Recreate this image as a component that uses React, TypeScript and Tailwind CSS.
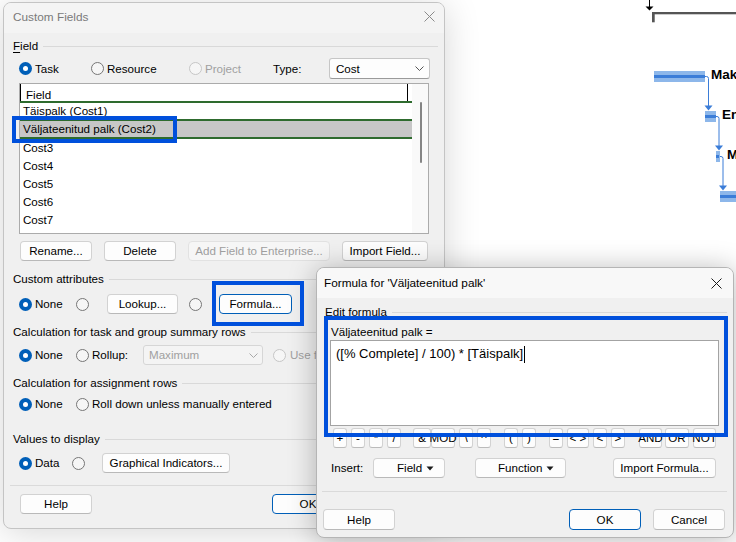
import React from "react";

const FONT = "font-['Liberation_Sans',Arial,sans-serif] text-[11.6px] leading-[14px]";

function Radio({ on = false, disabled = false }: { on?: boolean; disabled?: boolean }) {
  if (on)
    return (
      <span className="flex h-[13px] w-[13px] shrink-0 items-center justify-center rounded-full bg-[#005fb8]">
        <span className="h-[5px] w-[5px] rounded-full bg-white" />
      </span>
    );
  return (
    <span
      className={
        disabled
          ? "h-[13px] w-[13px] shrink-0 rounded-full border border-[#c6c6c6] bg-[#f6f6f6]"
          : "h-[13px] w-[13px] shrink-0 rounded-full border border-[#767676] bg-[#f6f6f6]"
      }
    />
  );
}

type BtnProps = {
  children?: React.ReactNode;
  className?: string;
  variant?: "normal" | "primary" | "disabled";
};

function Btn({ children, className = "", variant = "normal" }: BtnProps) {
  const v =
    variant === "primary"
      ? "border-[#005fb8] bg-[#fdfdfd] text-black"
      : variant === "disabled"
      ? "border-[#e2e2e2] bg-[#f6f6f6] text-[#9e9e9e]"
      : "border-[#d2d2d2] border-b-[#b9b9b9] bg-[#fdfdfd] text-black";
  return (
    <div
      className={`flex h-[20px] shrink-0 items-center justify-center whitespace-nowrap rounded-[4px] border ${v} ${className}`}
    >
      {children}
    </div>
  );
}

function GroupLabel({ children }: { children: React.ReactNode }) {
  return (
    <div className="flex h-[14px] items-center gap-[5px]">
      <span className="whitespace-nowrap">{children}</span>
      <span className="h-px flex-1 bg-[#d9d9d9]" />
    </div>
  );
}

function Chevron({ color }: { color: string }) {
  return (
    <svg width="9" height="5" viewBox="0 0 9 5" className="shrink-0">
      <path d="M0.5 0.5 L4.5 4.5 L8.5 0.5" fill="none" stroke={color} strokeWidth="1" />
    </svg>
  );
}

function CloseX({ color }: { color: string }) {
  return (
    <svg width="11" height="11" viewBox="0 0 11 11" className="shrink-0">
      <path d="M0.5 0.5 L10.5 10.5 M10.5 0.5 L0.5 10.5" stroke={color} strokeWidth="1" />
    </svg>
  );
}

function DownTri() {
  return (
    <svg width="8" height="5" viewBox="0 0 8 5" className="shrink-0">
      <path d="M0.5 0.5 H7.5 L4 4.5 Z" fill="#1a1a1a" />
    </svg>
  );
}

function Gantt() {
  const bar = "#8db7ea";
  const band = "#3b7dd8";
  return (
    <svg className="absolute left-0 top-0" width="736" height="542" viewBox="0 0 736 542">
      <line x1="649.5" y1="0" x2="649.5" y2="7" stroke="#000" strokeWidth="1" />
      <path d="M645.5 6.5 H653.5 L649.5 10.5 Z" fill="#000" />
      <rect x="652" y="12" width="84" height="2.3" fill="#555" />
      <rect x="652" y="12" width="2.7" height="10.3" fill="#555" />

      <rect x="654" y="71" width="51" height="11" fill={bar} />
      <rect x="654" y="75" width="51" height="3" fill={band} />
      <path d="M705 76.5 H706.5 Q708.5 76.5 708.5 78.5 V106" stroke={band} fill="none" />
      <path d="M704.5 105.5 H712.5 L708.5 110.5 Z" fill={band} />

      <rect x="705" y="111" width="11" height="11" fill={bar} />
      <rect x="705" y="115" width="11" height="3" fill={band} />
      <path d="M716 116.5 H717 Q719 116.5 719 118.5 V146" stroke={band} fill="none" />
      <path d="M715 145.5 H723 L719 150.5 Z" fill={band} />

      <rect x="716" y="151" width="4" height="11" fill={bar} />
      <rect x="716" y="155" width="3" height="3" fill={band} />
      <path d="M720 156.5 H721 Q723 156.5 723 158.5 V186" stroke={band} fill="none" />
      <path d="M719 185.5 H727 L723 190.5 Z" fill={band} />

      <rect x="720" y="191" width="16" height="11" fill={bar} />
      <rect x="720" y="195" width="16" height="3" fill={band} />

      <text x="711" y="79" fontSize="13.5" fontWeight="bold" fill="#000">Mak</text>
      <text x="722" y="119" fontSize="13.5" fontWeight="bold" fill="#000">En</text>
      <text x="727" y="159" fontSize="13.5" fontWeight="bold" fill="#000">M</text>
    </svg>
  );
}

function CustomFields() {
  const rows = ["Cost3", "Cost4", "Cost5", "Cost6", "Cost7", "Cost8"];
  return (
    <div className="absolute left-[3px] top-[2px] h-[527px] w-[442px] overflow-hidden rounded-[8px] border border-[#c4c4c4] bg-[#f0f0f0] shadow-[0_4px_36px_rgba(0,0,0,0.16)]">
      {/* title bar */}
      <div className="flex h-[30px] items-center justify-between bg-[#f4f4f4] pb-[3px] pl-[9px] pr-[9px]">
        <span className="text-[11.8px] text-[#7a7a7a]">Custom Fields</span>
        <CloseX color="#8a8a8a" />
      </div>

      <div className="flex flex-col pl-[9px] pr-[6px]">
        <div className="mt-[6px]">
          <GroupLabel>
            <span className="underline underline-offset-[2px]">F</span>ield
          </GroupLabel>
        </div>

        {/* Task / Resource / Project / Type */}
        <div className="ml-[6px] mt-[5px] flex h-[21px] items-center">
          <div className="flex w-[72px] items-center gap-[3px]">
            <Radio on />
            <span>Task</span>
          </div>
          <div className="flex w-[98px] items-center gap-[3px]">
            <Radio />
            <span>Resource</span>
          </div>
          <div className="flex w-[84px] items-center gap-[3px]">
            <Radio disabled />
            <span className="text-[#a0a0a0]">Project</span>
          </div>
          <span className="w-[56px]">Type:</span>
          <div className="flex h-[21px] w-[101px] items-center justify-between rounded-[3px] border border-[#c6c6c6] border-b-[#9a9a9a] bg-[#fdfdfd] pl-[6px] pr-[5px]">
            <span>Cost</span>
            <Chevron color="#555" />
          </div>
        </div>

        {/* list */}
        <div className="ml-[6px] mt-[4px] flex h-[151px] w-[410px] overflow-hidden border border-[#ababab] bg-white">
          <div className="flex w-[392px] flex-col">
            <div className="flex h-[17px] shrink-0 items-stretch border-l border-black">
              <span className="flex flex-1 items-center pl-[5px] pt-[4px]">Field</span>
              <span className="mr-[4px] w-px bg-black" />
            </div>
            <div className="h-[2px] shrink-0 bg-[#2e6b2e]" />
            <div className="flex h-[16px] shrink-0 items-center pl-[3px]">Täispalk (Cost1)</div>
            <div className="h-[2px] shrink-0 bg-[#2e6b2e]" />
            <div className="flex h-[16px] shrink-0 items-center bg-[#c7c7c7] pl-[3px]">Väljateenitud palk (Cost2)</div>
            <div className="h-[2px] shrink-0 bg-[#2e6b2e]" />
            {rows.map((r) => (
              <div key={r} className="flex h-[18px] shrink-0 items-center pl-[3px]">
                {r}
              </div>
            ))}
          </div>
          <div className="flex w-[16px] flex-col bg-[#f9f9f9] pt-[18px]">
            <div className="ml-[8px] h-[61px] w-[2px] rounded-full bg-[#858585]" />
          </div>
        </div>

        {/* list buttons */}
        <div className="mt-[7px] flex h-[20px] items-center">
          <Btn className="ml-[7px] w-[72px]">Rename...</Btn>
          <Btn className="ml-[12px] w-[72px]">Delete</Btn>
          <Btn className="ml-[12px] w-[142px]" variant="disabled">
            Add Field to Enterprise...
          </Btn>
          <Btn className="ml-[12px] w-[86px]">Import Field...</Btn>
        </div>

        <div className="mt-[11px]">
          <GroupLabel>Custom attributes</GroupLabel>
        </div>
        <div className="ml-[6px] mt-[8px] flex h-[20px] items-center">
          <div className="flex w-[57px] items-center gap-[3px]">
            <Radio on />
            <span>None</span>
          </div>
          <Radio />
          <Btn className="ml-[18px] w-[71px]">Lookup...</Btn>
          <span className="ml-[11px] flex">
            <Radio />
          </span>
          <Btn className="ml-[17px] w-[73px]" variant="primary">
            Formula...
          </Btn>
        </div>

        <div className="mt-[11px]">
          <GroupLabel>Calculation for task and group summary rows</GroupLabel>
        </div>
        <div className="ml-[6px] mt-[6px] flex h-[20px] items-center">
          <div className="flex w-[57px] items-center gap-[3px]">
            <Radio on />
            <span>None</span>
          </div>
          <div className="flex w-[67px] items-center gap-[3px]">
            <Radio />
            <span>Rollup:</span>
          </div>
          <div className="flex h-[20px] w-[120px] items-center justify-between rounded-[3px] border border-[#d6d6d6] bg-[#f4f4f4] pl-[5px] pr-[4px] text-[#a0a0a0]">
            <span>Maximum</span>
            <Chevron color="#a8a8a8" />
          </div>
          <div className="ml-[10px] flex items-center gap-[4px] whitespace-nowrap">
            <Radio disabled />
            <span className="text-[#a0a0a0]">Use formula</span>
          </div>
        </div>

        <div className="mt-[11px]">
          <GroupLabel>Calculation for assignment rows</GroupLabel>
        </div>
        <div className="ml-[6px] mt-[4px] flex h-[20px] items-center">
          <div className="flex w-[57px] items-center gap-[3px]">
            <Radio on />
            <span>None</span>
          </div>
          <div className="flex items-center gap-[3px] whitespace-nowrap">
            <Radio />
            <span>Roll down unless manually entered</span>
          </div>
        </div>

        <div className="mt-[18px]">
          <GroupLabel>Values to display</GroupLabel>
        </div>
        <div className="ml-[6px] mt-[7px] flex h-[20px] items-center">
          <div className="flex w-[53px] items-center gap-[3px]">
            <Radio on />
            <span>Data</span>
          </div>
          <Radio />
          <Btn className="ml-[17px] w-[128px]">Graphical Indicators...</Btn>
        </div>

        <div className="-ml-[3px] -mr-[3px] mt-[12px] h-px bg-[#dadada]" />

        <div className="mt-[8px] flex h-[20px] items-center">
          <Btn className="ml-[7px] w-[72px]">Help</Btn>
          <Btn className="ml-[180px] w-[72px]" variant="primary">
            OK
          </Btn>
          <Btn className="ml-[12px] w-[72px]">Cancel</Btn>
        </div>
      </div>
    </div>
  );
}

function Op({ children, className = "" }: { children: React.ReactNode; className?: string }) {
  return (
    <div
      className={`flex h-[20px] shrink-0 items-center justify-center overflow-visible whitespace-nowrap rounded-[3px] border border-[#d2d2d2] border-b-[#bbbbbb] bg-[#fdfdfd] ${className}`}
    >
      {children}
    </div>
  );
}

function FormulaDialog() {
  return (
    <div className="absolute left-[316px] top-[267px] h-[271px] w-[418px] overflow-hidden rounded-[8px] border border-[#b5b5b5] bg-[#f0f0f0] shadow-[0_2px_28px_rgba(0,0,0,0.28)]">
      <div className="flex h-[30px] items-center justify-between bg-[#f8f8f8] pl-[7px] pr-[11px]">
        <span className="text-[11.8px]">Formula for 'Väljateenitud palk'</span>
        <CloseX color="#1a1a1a" />
      </div>

      <div className="flex flex-col pl-[8px] pr-[6px]">
        <div className="mt-[7px]">
          <GroupLabel>Edit formula</GroupLabel>
        </div>
        <div className="ml-[6px] mt-[6px] h-[14px]">Väljateenitud palk =</div>
        <div className="ml-[5px] mt-[1px] h-[86px] w-[389px] border border-[#a3a3a3] bg-white pl-[5px] pt-[5px]">
          <div className="flex h-[16px] items-center text-[13px] leading-[16px]">
            <span>([% Complete] / 100) * [Täispalk]</span>
            <span className="ml-[1px] h-[17px] w-px bg-black" />
          </div>
        </div>

        <div className="ml-[8px] mt-[2px] flex h-[20px] items-center">
          <Op className="w-[14px]">+</Op>
          <Op className="ml-[4px] w-[14px]">-</Op>
          <Op className="ml-[4px] w-[14px]">*</Op>
          <Op className="ml-[4px] w-[14px]">/</Op>
          <Op className="ml-[12px] w-[18px]">&amp;</Op>
          <Op className="w-[24px]">MOD</Op>
          <Op className="ml-[4px] w-[14px]">\</Op>
          <Op className="ml-[4px] w-[14px]">^</Op>
          <Op className="ml-[13px] w-[14px]">(</Op>
          <Op className="ml-[4px] w-[14px]">)</Op>
          <Op className="ml-[13px] w-[14px]">=</Op>
          <Op className="ml-[4px] w-[22px]">&lt; &gt;</Op>
          <Op className="ml-[4px] w-[14px]">&lt;</Op>
          <Op className="ml-[4px] w-[14px]">&gt;</Op>
          <Op className="ml-[14px] w-[23px]">AND</Op>
          <Op className="ml-[3px] w-[24px]">OR</Op>
          <Op className="ml-[4px] w-[23px]">NOT</Op>
        </div>

        <div className="mt-[10px] flex h-[20px] items-center">
          <span className="ml-[6px] w-[42px]">Insert:</span>
          <Btn className="w-[72px] !justify-start gap-[4px] pl-[23px]">
            <span>Field</span>
            <DownTri />
          </Btn>
          <Btn className="ml-[30px] w-[91px] !justify-start gap-[4px] pl-[22px]">
            <span>Function</span>
            <DownTri />
          </Btn>
          <Btn className="ml-[47px] w-[103px]">Import Formula...</Btn>
        </div>

        <div className="-ml-[3px] mt-[13px] h-px bg-[#dadada]" />

        <div className="mt-[17px] flex h-[21px] items-center">
          <Btn className="-ml-[2px] h-[21px] w-[72px]">Help</Btn>
          <Btn className="ml-[174px] h-[21px] w-[72px]" variant="primary">
            OK
          </Btn>
          <Btn className="ml-[12px] h-[21px] w-[72px]">Cancel</Btn>
        </div>
      </div>
    </div>
  );
}

export default function App() {
  return (
    <div className={`relative h-[542px] w-[736px] overflow-hidden bg-white text-black ${FONT}`}>
      <Gantt />
      <CustomFields />
      <FormulaDialog />
      <div className="absolute left-[12px] top-[116px] h-[27px] w-[165px] border-[4px] border-[#0050dc]" />
      <div className="absolute left-[212px] top-[281px] h-[45px] w-[92px] border-[4px] border-[#0050dc]" />
      <div className="absolute left-[324px] top-[316px] h-[121px] w-[404px] border-[4px] border-[#0050dc]" />
    </div>
  );
}
